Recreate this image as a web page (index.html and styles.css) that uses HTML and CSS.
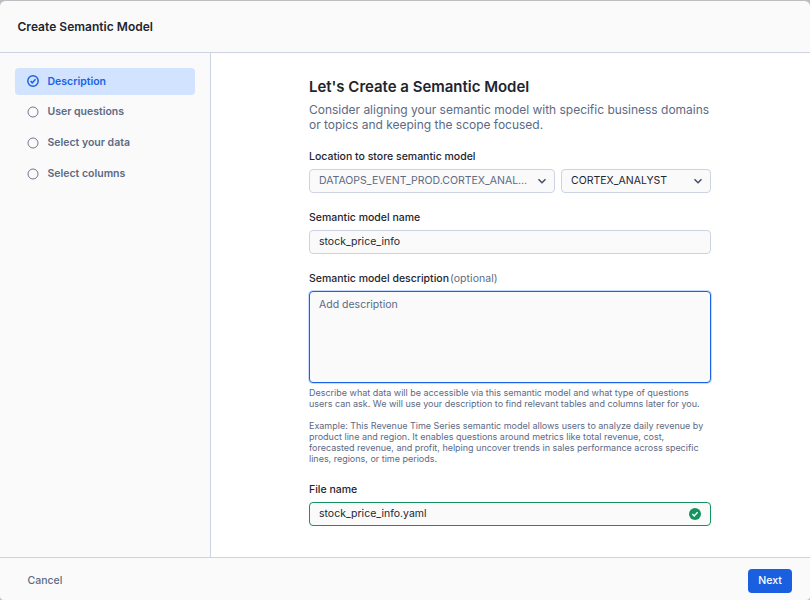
FILE: index.html
```html
<!DOCTYPE html>
<html lang="en">
<head>
<meta charset="utf-8">
<title>Create Semantic Model</title>
<link rel="stylesheet" href="styles.css">
</head>
<body>
<div class="dialog">
  <header class="header">Create Semantic Model</header>
  <div class="body">
    <nav class="sidebar">
      <div class="step active"><svg class="dot" viewBox="0 0 12 12"><circle cx="6" cy="6" r="5.2"/><path d="M3.6 6.1 5.3 7.8 8.5 4.3"/></svg><span>Description</span></div>
      <div class="step"><svg class="dot" viewBox="0 0 12 12"><circle cx="6" cy="6" r="5"/></svg><span>User questions</span></div>
      <div class="step"><svg class="dot" viewBox="0 0 12 12"><circle cx="6" cy="6" r="5"/></svg><span>Select your data</span></div>
      <div class="step"><svg class="dot" viewBox="0 0 12 12"><circle cx="6" cy="6" r="5"/></svg><span>Select columns</span></div>
    </nav>
    <main class="main">
      <div class="form">
        <h1 class="title">Let's Create a Semantic Model</h1>
        <p class="intro">Consider aligning your semantic model with specific business domains<br>or topics and keeping the scope focused.</p>
        <div class="label">Location to store semantic model</div>
        <div class="selects">
          <div class="field muted wide"><span>DATAOPS_EVENT_PROD.CORTEX_ANAL...</span><svg class="chevron" viewBox="0 0 10 10"><path d="M1.5 3.2 5 6.7 8.5 3.2"/></svg></div>
          <div class="field narrow"><span>CORTEX_ANALYST</span><svg class="chevron" viewBox="0 0 10 10"><path d="M1.5 3.2 5 6.7 8.5 3.2"/></svg></div>
        </div>
        <div class="label">Semantic model name</div>
        <div class="field"><span>stock_price_info</span></div>
        <div class="label">Semantic model description<span class="optional">(optional)</span></div>
        <div class="textarea">Add description</div>
        <p class="help">Describe what data will be accessible via this semantic model and what type of questions<br>users can ask. We will use your description to find relevant tables and columns later for you.</p>
        <p class="help">Example: This Revenue Time Series semantic model allows users to analyze daily revenue by<br>product line and region. It enables questions around metrics like total revenue, cost,<br>forecasted revenue, and profit, helping uncover trends in sales performance across specific<br>lines, regions, or time periods.</p>
        <div class="label file-label">File name</div>
        <div class="field valid"><span>stock_price_info.yaml</span><svg class="check" viewBox="0 0 12 12"><circle cx="6" cy="6" r="6"/><path d="M3.4 6.1 5.2 7.9 8.6 4.3"/></svg></div>
      </div>
    </main>
  </div>
  <footer class="footer"><span class="cancel">Cancel</span><span class="next">Next</span></footer>
</div>
</body>
</html>
```
FILE: styles.css
```css
* { box-sizing: border-box; }
body { margin: 0; background: #bcbdc0; font-family: Inter, sans-serif; font-size: 10.5px; color: #1e252f; }
.dialog { height: 600px; display: flex; flex-direction: column; background: #fafafa; border-top: 1px solid #bcbdc0; border-radius: 6px 6px 4px 4px; overflow: hidden; }
.header { height: 52px; flex: none; padding-left: 17.5px; line-height: 51px; font-size: 12px; font-weight: 600; letter-spacing: 0.02px; border-bottom: 1px solid #cdd3e2; }
.body { flex: 1; display: flex; min-height: 0; }
.sidebar { width: 211px; flex: none; padding: 15px; border-right: 1px solid #cdd3e2; }
.step { height: 27px; margin-bottom: 4px; padding-left: 12px; display: flex; align-items: center; font-weight: 600; color: #5d6a85; border-radius: 4px; }
.step span { padding-bottom: 1px; }
.step.active { margin-bottom: 3px; padding-bottom: 1px; background: #d2e3ff; color: #1a62e8; }
.step.active span { padding: 1px 0 0; }
.dot { width: 12px; height: 12px; margin-right: 8.5px; fill: none; stroke: #5d6a85; stroke-width: 0.9; }
.active .dot { stroke: #1a62e8; stroke-width: 1.5; }
.main { flex: 1; background: #fff; }
.form { width: 402px; margin-left: 98px; padding-top: 25px; }
.title { margin: 0; font-size: 15px; line-height: 18px; font-weight: 600; letter-spacing: -0.02px; }
.intro { margin: 6px 0 17px; font-size: 12px; line-height: 15px; letter-spacing: -0.015px; color: #5d6a85; }
.label { height: 14px; margin-bottom: 6px; line-height: 16px; font-weight: 500; }
.optional { margin-left: 1px; font-weight: 400; letter-spacing: 0.05px; color: #5d6a85; }
.field { height: 24px; margin-bottom: 17px; padding: 0 9px; display: flex; align-items: center; justify-content: space-between; border: 1px solid #cdd3e2; border-radius: 4px; background: #fafafa; }
.field span { padding-bottom: 1px; }
.selects { display: flex; gap: 6px; }
.wide { width: 246px; }
.narrow { width: 150px; }
.muted { color: #5d6a85; }
.chevron { width: 10px; height: 10px; margin: 0 -2px 1px 0; fill: none; stroke: #46536f; stroke-width: 1.6; }
.textarea { height: 92px; margin-bottom: 4px; padding: 6px 9px; line-height: 13px; border: 1px solid #1a62e8; box-shadow: 0 0 0 1px #c6dbff; border-radius: 4px; background: #fafafa; color: #5d6a85; }
.help { margin: 0 0 11px; font-size: 9px; line-height: 11px; letter-spacing: -0.01px; color: #5d6a85; }
.file-label { margin-top: 18px; }
.valid { border-color: #13935f; }
.check { width: 12px; height: 12px; fill: #13935f; }
.check path { fill: none; stroke: #fff; stroke-width: 1.4; }
.footer { height: 43px; flex: none; padding: 3px 18px 0 27.5px; display: flex; align-items: center; justify-content: space-between; border-top: 1px solid #cdd3e2; }
.cancel { font-weight: 500; color: #5d6a85; padding-bottom: 1px; }
.next { width: 44px; height: 24px; line-height: 23px; text-align: center; font-weight: 500; background: #1a5fe0; color: #fff; border-radius: 4px; }
```
